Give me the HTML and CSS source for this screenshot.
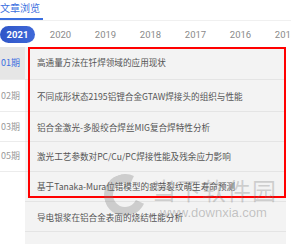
FILE: index.html
```html
<!DOCTYPE html>
<html lang="zh">
<head>
<meta charset="utf-8">
<link rel="stylesheet" href="styles.css">
</head>
<body>
<div class="screen">
  <div class="tabs">
    <div class="tab active">文章浏览</div>
  </div>
  <div class="years">
    <div class="year current">2021</div>
    <div class="year">2020</div>
    <div class="year">2019</div>
    <div class="year">2018</div>
    <div class="year">2017</div>
    <div class="year">2016</div>
    <div class="year">2015</div>
  </div>
  <div class="content">
    <div class="issues">
      <div class="issue r1 active">01期</div>
      <div class="issue r2">02期</div>
      <div class="issue r3">03期</div>
      <div class="issue r4">05期</div>
      <div class="issue r5 empty"></div>
      <div class="issue r6 empty"></div>
      <div class="issue r6 empty"></div>
    </div>
    <div class="articles">
      <div class="article r1">高通量方法在钎焊领域的应用现状</div>
      <div class="article r2">不同成形状态2195铝锂合金GTAW焊接头的组织与性能</div>
      <div class="article r3">铝合金激光-多股绞合焊丝MIG复合焊特性分析</div>
      <div class="article r4">激光工艺参数对PC/Cu/PC焊接性能及残余应力影响</div>
      <div class="article r5">基于Tanaka-Mura位错模型的疲劳裂纹萌生寿命预测</div>
      <div class="article r6">导电银浆在铝合金表面的烧结性能分析</div>
      <div class="article r6"></div>
    </div>
  </div>
  <div class="highlight"></div>
  <div class="watermark">
    <div class="wm-logo"></div>
    <div class="wm-name">当下软件园</div>
    <div class="wm-url">www.downxia.com</div>
  </div>
</div>
</body>
</html>
```
FILE: styles.css
```css
html, body {
  margin: 0;
  padding: 0;
  background: #ffffff;
}
body {
  font-family: "Noto Sans CJK SC", "Noto Sans", Roboto, sans-serif;
  width: 291px;
  height: 244px;
  overflow: hidden;
}
.screen {
  position: relative;
  width: 291px;
  height: 244px;
  overflow: hidden;
}
.tabs {
  height: 20px;
  border-bottom: 1px solid #f0f0f0;
  display: flex;
  align-items: flex-start;
}
.tab {
  width: 43px;
  height: 20px;
  box-sizing: border-box;
  padding-top: 1px;
  font-size: 10px;
  line-height: 14px;
  color: #3b6fe0;
  border-bottom: 2px solid #3b6fe0;
  white-space: nowrap;
}
.years {
  height: 26px;
  display: flex;
  align-items: center;
  white-space: nowrap;
}
.year {
  flex: 0 0 45px;
  text-align: center;
  font-family: Roboto, "Noto Sans", sans-serif;
  font-size: 9.5px;
  color: #8a8a8a;
}
.year.current {
  flex: 0 0 35px;
  height: 17px;
  line-height: 17px;
  margin-right: 3px;
  border-radius: 9px;
  background: linear-gradient(90deg, #2f56c8, #3f68d8);
  color: #ffffff;
  font-weight: 700;
}
.content {
  display: flex;
}
.issues {
  flex: 0 0 25px;
  background: #ffffff;
}
.issue {
  border-bottom: 1px solid #ececec;
  font-size: 9px;
  color: #9a9a9a;
  text-align: right;
  padding-right: 5px;
  white-space: nowrap;
  overflow: hidden;
  text-indent: -4px;
}
.issue.active {
  background: #e6e6e6;
  color: #3b6fe0;
}
.issue.empty {
  border-bottom-color: #ffffff;
}
.articles {
  flex: 1;
  background: #f3f3f3;
  margin-right: 5px;
}
.article {
  border-bottom: 1px solid #e4e4e4;
  font-size: 8.6px;
  color: #555555;
  padding-left: 12px;
  white-space: nowrap;
  overflow: hidden;
}
.r1 { height: 32px; line-height: 31px; }
.r2 { height: 31px; line-height: 32px; }
.r3 { height: 29px; line-height: 30px; }
.r4 { height: 29px; line-height: 28px; }
.r5 { height: 29px; line-height: 28px; }
.r6 { height: 29px; line-height: 30px; }
.highlight {
  position: absolute;
  left: 28px;
  top: 47px;
  width: 258px;
  height: 151px;
  box-sizing: border-box;
  border: 2px solid #ff0000;
}
.watermark {
  position: absolute;
  left: 100px;
  top: 172px;
  width: 191px;
  height: 60px;
  pointer-events: none;
}
.wm-logo {
  position: absolute;
  left: 4px;
  top: 2px;
  width: 42px;
  height: 42px;
  border-radius: 50%;
  border: 9px solid rgba(120, 120, 120, 0.3);
  border-right-color: transparent;
  box-sizing: border-box;
  transform: rotate(-20deg);
}
.wm-name {
  position: absolute;
  left: 52px;
  top: 4px;
  font-size: 24px;
  line-height: 28px;
  letter-spacing: 1px;
  color: rgba(110, 110, 110, 0.28);
  white-space: nowrap;
}
.wm-url {
  position: absolute;
  left: 60px;
  top: 33px;
  font-family: "Liberation Sans", Arial, sans-serif;
  font-size: 13px;
  line-height: 16px;
  color: rgba(110, 110, 110, 0.38);
  white-space: nowrap;
}
```
